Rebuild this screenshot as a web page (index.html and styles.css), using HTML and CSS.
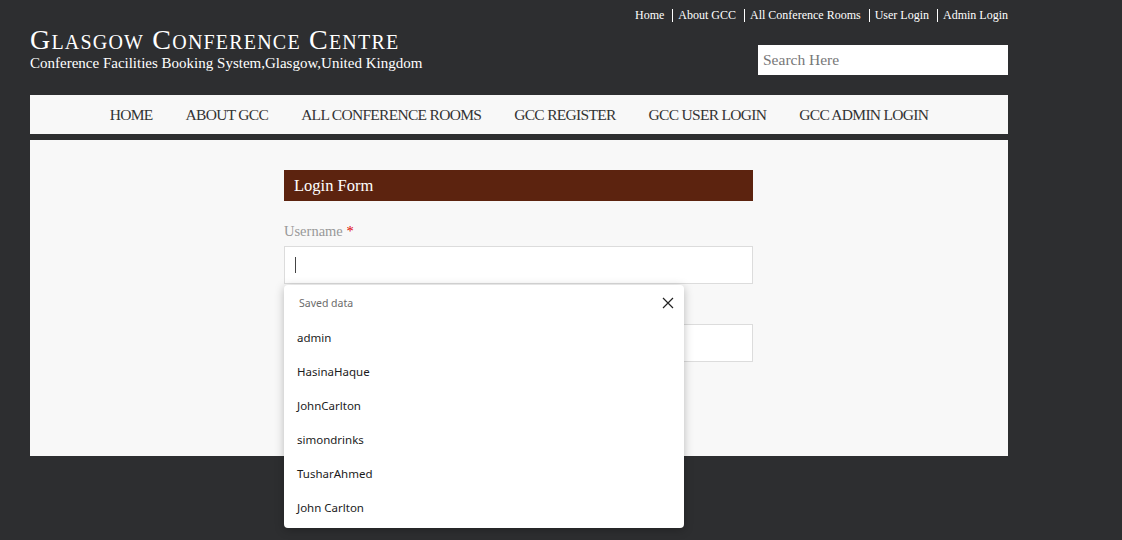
FILE: index.html
```html
<!DOCTYPE html>
<html>
<head>
<meta charset="utf-8">
<link rel="stylesheet" href="styles.css">
</head>
<body>
<div class="page">
  <header class="top">
    <div class="brand">
      <h1 class="title">Glasgow Conference Centre</h1>
      <p class="subtitle">Conference Facilities Booking System,Glasgow,United Kingdom</p>
    </div>
    <div class="top-right">
      <nav class="toplinks">
        <a href="#">Home</a><span class="sep"></span><a href="#">About GCC</a><span class="sep"></span><a href="#">All Conference Rooms</a><span class="sep"></span><a href="#">User Login</a><span class="sep"></span><a href="#">Admin Login</a>
      </nav>
      <input class="search" type="text" placeholder="Search Here">
    </div>
  </header>
  <nav class="mainnav">
    <a href="#">HOME</a>
    <a href="#">ABOUT GCC</a>
    <a href="#">ALL CONFERENCE ROOMS</a>
    <a href="#">GCC REGISTER</a>
    <a href="#">GCC USER LOGIN</a>
    <a href="#">GCC ADMIN LOGIN</a>
  </nav>
  <main class="content">
    <div class="form">
      <div class="form-head">Login Form</div>
      <label class="label">Username <span class="req">*</span></label>
      <div class="field-wrap">
        <div class="input focused"><span class="caret"></span></div>
        <div class="autofill">
          <div class="af-head"><span>Saved data</span>
            <svg class="af-close" width="12" height="12" viewBox="0 0 12 12"><path d="M1 1L11 11M11 1L1 11" stroke="#222" stroke-width="1.2" fill="none"/></svg>
          </div>
          <div class="af-item">admin</div>
          <div class="af-item">HasinaHaque</div>
          <div class="af-item">JohnCarlton</div>
          <div class="af-item">simondrinks</div>
          <div class="af-item">TusharAhmed</div>
          <div class="af-item">John Carlton</div>
        </div>
      </div>
      <div class="spacer"></div>
      <div class="input"></div>
    </div>
  </main>
</div>
</body>
</html>
```
FILE: styles.css
```css
* { box-sizing: border-box; }
html, body { margin: 0; padding: 0; }
body {
  background: #2d2e30;
  font-family: "Liberation Serif", "DejaVu Serif", serif;
  color: #fff;
  height: 540px;
  overflow: hidden;
}
.page { width: 978px; margin-left: 30px; }
.top {
  display: flex;
  justify-content: space-between;
  height: 95px;
}
.brand { padding-top: 25px; }
.title {
  margin: 0;
  font-weight: normal;
  font-variant: small-caps;
  font-size: 28px;
  line-height: 29px;
  letter-spacing: 1.2px;
  color: #fff;
}
.subtitle {
  margin: 0;
  font-size: 15px;
  line-height: 18px;
  color: #fff;
}
.top-right {
  display: flex;
  flex-direction: column;
  align-items: flex-end;
  padding-top: 7px;
}
.toplinks {
  display: flex;
  align-items: center;
  font-size: 12px;
  line-height: 16px;
}
.toplinks a { color: #fff; text-decoration: none; }
.sep {
  display: inline-block;
  width: 1px;
  height: 13px;
  background: #fff;
  margin: 0 5px 0 8px;
}
.search {
  margin-top: 22px;
  width: 250px;
  height: 30px;
  border: 0;
  padding: 0 5px;
  font-family: "Liberation Serif", serif;
  font-size: 15.5px;
  background: #fff;
  outline: none;
}
.search::placeholder { color: #777; }
.mainnav {
  background: #f8f8f8;
  height: 39px;
  display: flex;
  justify-content: center;
  align-items: center;
  gap: 33px;
  margin-bottom: 6px;
}
.mainnav a {
  color: #333;
  text-decoration: none;
  font-size: 15.5px;
  letter-spacing: -0.7px;
}
.content {
  background: #f8f8f8;
  height: 316px;
  padding-top: 30px;
  display: flex;
  justify-content: center;
}
.form { width: 469px; margin-left: -1px; }
.form-head {
  background: #5c230f;
  color: #fff;
  height: 31px;
  line-height: 31px;
  padding-left: 10px;
  font-size: 16.5px;
}
.label {
  display: block;
  color: #999;
  font-size: 14.5px;
  margin-top: 20px;
  height: 25px;
  line-height: 20px;
}
.spacer { height: 40px; }
.req { color: #d00; }
.field-wrap { position: relative; }
.input {
  height: 38px;
  background: #fff;
  border: 1px solid #dcdcdc;
  position: relative;
}
.caret {
  position: absolute;
  left: 10px;
  top: 10px;
  width: 1px;
  height: 16px;
  background: #444;
}
.autofill {
  position: absolute;
  left: 0;
  top: 39px;
  width: 400px;
  height: 243px;
  background: #fff;
  border-radius: 4px;
  box-shadow: 0 2px 10px rgba(0,0,0,0.25);
  z-index: 5;
  font-family: "Noto Sans", "Open Sans", sans-serif;
  color: #1b1b1b;
  padding-top: 10px;
}
.af-head {
  display: flex;
  justify-content: space-between;
  align-items: center;
  height: 16px;
  padding: 0 10px 0 15px;
  font-size: 10.5px;
  color: #6b6b6b;
}
.af-item {
  height: 34px;
  line-height: 34px;
  padding-left: 13px;
  font-size: 11.5px;
}
.af-head + .af-item { margin-top: 10px; }
```
